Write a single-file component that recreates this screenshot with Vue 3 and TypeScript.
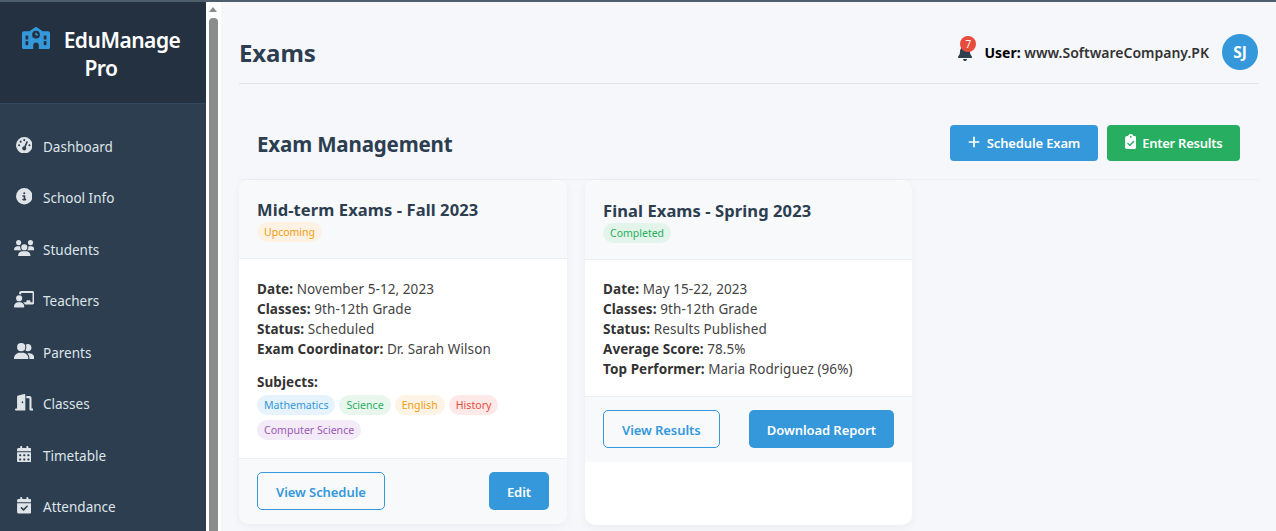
<script setup lang="ts">
interface NavItem { label: string; vb: string; w: number; d: string }
const calTop = 'M128 0c17.700 0 32 14.300 32 32V64H288V32c0-17.700 14.300-32 32-32s32 14.300 32 32V64h48c26.500 0 48 21.500 48 48v48H0V112C0 85.500 21.500 64 48 64H96V32c0-17.700 14.300-32 32-32z'
const nav: NavItem[] = [
  { label: 'Dashboard', vb: '0 0 512 512', w: 16.5, d: 'M0 256a256 256 0 1 1 512 0A256 256 0 1 1 0 256zM288 96a32 32 0 1 0 -64 0 32 32 0 1 0 64 0zM256 416c35.300 0 64-28.700 64-64c0-17.400-6.900-33.100-18.100-44.600L366 161.700c5.300-12.100-.2-26.300-12.300-31.600s-26.300 .2-31.600 12.300L257.900 288c-.6 0-1.300 0-1.900 0c-35.300 0-64 28.700-64 64s28.700 64 64 64zM176 144a32 32 0 1 0 -64 0 32 32 0 1 0 64 0zM96 288a32 32 0 1 0 0-64 32 32 0 1 0 0 64zm352-32a32 32 0 1 0 -64 0 32 32 0 1 0 64 0z' },
  { label: 'School Info', vb: '0 0 512 512', w: 16.5, d: 'M256 512A256 256 0 1 0 256 0a256 256 0 1 0 0 512zM216 336h24V272H216c-13.300 0-24-10.700-24-24s10.700-24 24-24h48c13.300 0 24 10.700 24 24v88h8c13.300 0 24 10.700 24 24s-10.700 24-24 24H216c-13.300 0-24-10.700-24-24s10.700-24 24-24zm40-208a32 32 0 1 1 0 64 32 32 0 1 1 0-64z' },
  { label: 'Students', vb: '0 0 640 512', w: 20.6, d: 'M144 0a80 80 0 1 1 0 160A80 80 0 1 1 144 0zM512 0a80 80 0 1 1 0 160A80 80 0 1 1 512 0zM0 298.700C0 239.800 47.800 192 106.700 192h42.700c15.900 0 31 3.500 44.600 9.700c-1.300 7.200-1.900 14.700-1.900 22.300c0 38.200 16.800 72.500 43.300 96c-.2 0-.4 0-.7 0H21.300C9.600 320 0 310.400 0 298.700zM405.300 320c-.2 0-.4 0-.7 0c26.600-23.500 43.300-57.800 43.300-96c0-7.600-.7-15-1.900-22.300c13.600-6.300 28.700-9.700 44.600-9.700h42.700C592.200 192 640 239.800 640 298.700c0 11.800-9.600 21.300-21.300 21.300H405.300zM224 224a96 96 0 1 1 192 0 96 96 0 1 1 -192 0zM128 485.300C128 411.700 187.700 352 261.300 352H378.700C452.300 352 512 411.700 512 485.300c0 14.700-11.900 26.700-26.700 26.700H154.700c-14.700 0-26.700-11.900-26.700-26.700z' },
  { label: 'Teachers', vb: '0 0 640 512', w: 20.6, d: 'M160 64c0-35.300 28.700-64 64-64H576c35.300 0 64 28.700 64 64V352c0 35.300-28.700 64-64 64H336.800c-11.800-25.500-29.900-47.500-52.400-64H384V320c0-17.700 14.300-32 32-32h64c17.700 0 32 14.300 32 32v32h64V64L224 64v49.100C205.200 102.200 183.300 96 160 96V64zm0 64a96 96 0 1 1 0 192 96 96 0 1 1 0-192zM133.300 352h53.300C260.300 352 320 411.700 320 485.300c0 14.700-11.900 26.700-26.700 26.700H26.700C11.900 512 0 500.100 0 485.300C0 411.700 59.700 352 133.300 352z' },
  { label: 'Parents', vb: '0 0 640 512', w: 20.6, d: 'M96 128a128 128 0 1 1 256 0A128 128 0 1 1 96 128zM0 482.300C0 383.800 79.800 304 178.300 304h91.400C368.200 304 448 383.800 448 482.300c0 16.400-13.300 29.700-29.700 29.700H29.700C13.300 512 0 498.700 0 482.300zM609.300 512H471.400c5.400-9.400 8.600-20.300 8.600-32v-8c0-60.700-27.100-115.200-69.800-151.800c2.400-.1 4.700-.2 7.100-.2h61.400C567.800 320 640 392.200 640 481.300c0 17-13.800 30.700-30.700 30.700zM432 256c-31 0-59-12.600-79.300-32.900C372.400 196.500 384 163.600 384 128c0-26.800-6.600-52.100-18.300-74.300C384.300 40.100 407.200 32 432 32c61.900 0 112 50.100 112 112s-50.100 112-112 112z' },
  { label: 'Classes', vb: '0 0 576 512', w: 18.6, d: 'M320 32c0-9.900-4.500-19.200-12.300-25.200S289.800-1.400 280.200 1l-179.900 45C79 51.300 64 70.500 64 92.500V448H32c-17.700 0-32 14.300-32 32s14.300 32 32 32H96 288h32V480 32zM256 256c0 17.700-10.700 32-24 32s-24-14.300-24-32s10.700-32 24-32s24 14.300 24 32zm96-128h96V480c0 17.700 14.300 32 32 32h64c17.700 0 32-14.300 32-32s-14.300-32-32-32H512V128c0-35.300-28.700-64-64-64H352v64z' },
  { label: 'Timetable', vb: '0 0 448 512', w: 14.6, d: calTop + 'M0 192H448V464c0 26.500-21.500 48-48 48H48c-26.500 0-48-21.500-48-48V192zm64 80v32c0 8.800 7.200 16 16 16h32c8.800 0 16-7.200 16-16V272c0-8.800-7.200-16-16-16H80c-8.800 0-16 7.200-16 16zm128 0v32c0 8.800 7.200 16 16 16h32c8.800 0 16-7.200 16-16V272c0-8.800-7.200-16-16-16H208c-8.800 0-16 7.200-16 16zm144-16c-8.800 0-16 7.200-16 16v32c0 8.800 7.200 16 16 16h32c8.800 0 16-7.200 16-16V272c0-8.800-7.200-16-16-16H336zM64 400v32c0 8.800 7.200 16 16 16h32c8.800 0 16-7.200 16-16V400c0-8.800-7.200-16-16-16H80c-8.800 0-16 7.200-16 16zm144-16c-8.800 0-16 7.200-16 16v32c0 8.800 7.200 16 16 16h32c8.800 0 16-7.200 16-16V400c0-8.800-7.200-16-16-16H208zm112 16v32c0 8.800 7.200 16 16 16h32c8.800 0 16-7.200 16-16V400c0-8.800-7.200-16-16-16H336c-8.800 0-16 7.200-16 16z' },
  { label: 'Attendance', vb: '0 0 448 512', w: 14.6, d: calTop + 'M0 192H448V464c0 26.500-21.500 48-48 48H48c-26.500 0-48-21.500-48-48V192zM329 305c9.400-9.400 9.400-24.600 0-33.900s-24.600-9.400-33.900 0l-95 95-47-47c-9.400-9.400-24.600-9.400-33.900 0s-9.400 24.600 0 33.900l64 64c9.400 9.400 24.600 9.400 33.900 0L329 305z' }
]
const school = 'M337.800 5.400C327-1.800 313-1.800 302.200 5.400L166.300 96H48C21.500 96 0 117.500 0 144V464c0 26.500 21.500 48 48 48H592c26.500 0 48-21.500 48-48V144c0-26.500-21.500-48-48-48H473.700L337.800 5.400zM256 416c0-35.300 28.700-64 64-64s64 28.700 64 64v96H256V416zM96 192h32c8.800 0 16 7.200 16 16v64c0 8.800-7.200 16-16 16H96c-8.800 0-16-7.200-16-16V208c0-8.800 7.200-16 16-16zm400 16c0-8.800 7.200-16 16-16h32c8.800 0 16 7.200 16 16v64c0 8.800-7.200 16-16 16H512c-8.800 0-16-7.200-16-16V208zM96 320h32c8.800 0 16 7.200 16 16v64c0 8.800-7.200 16-16 16H96c-8.800 0-16-7.200-16-16V336c0-8.800 7.200-16 16-16zm400 16c0-8.800 7.200-16 16-16h32c8.800 0 16 7.200 16 16v64c0 8.800-7.200 16-16 16H512c-8.800 0-16-7.200-16-16V336zM232 176a88 88 0 1 1 176 0 88 88 0 1 1 -176 0zm88-48c-8.800 0-16 7.200-16 16v32c0 8.800 7.200 16 16 16h32c8.800 0 16-7.200 16-16s-7.200-16-16-16H336V144c0-8.800-7.200-16-16-16z'
const bell = 'M224 0c-17.700 0-32 14.300-32 32V51.200C119 66 64 130.600 64 208v18.800c0 47-17.300 92.400-48.500 127.600l-7.400 8.300c-8.400 9.400-10.400 22.900-5.300 34.400S19.400 416 32 416H416c12.600 0 24-7.400 29.200-18.900s3.100-25-5.300-34.400l-7.400-8.300C401.300 319.200 384 273.900 384 226.800V208c0-77.400-55-142-128-156.800V32c0-17.700-14.300-32-32-32zm45.300 493.300c12-12 18.700-28.300 18.700-45.300H224 160c0 17 6.700 33.300 18.700 45.300s28.300 18.700 45.300 18.700s33.300-6.700 45.300-18.700z'
const plus = 'M256 80c0-17.700-14.300-32-32-32s-32 14.300-32 32V224H48c-17.700 0-32 14.300-32 32s14.300 32 32 32H192V432c0 17.700 14.300 32 32 32s32-14.300 32-32V288H400c17.700 0 32-14.300 32-32s-14.300-32-32-32H256V80z'
const clip = 'M192 0c-41.800 0-77.400 26.700-90.500 64H64C28.700 64 0 92.700 0 128V448c0 35.300 28.700 64 64 64H320c35.300 0 64-28.700 64-64V128c0-35.300-28.700-64-64-64H282.500C269.400 26.700 233.800 0 192 0zm0 64a32 32 0 1 1 0 64 32 32 0 1 1 0-64zM305 273L177 401c-9.400 9.400-24.600 9.400-33.900 0L79 337c-9.400-9.400-9.400-24.600 0-33.900s24.600-9.400 33.900 0l47 47L271 239c9.400-9.400 24.600-9.400 33.900 0s9.400 24.600 0 33.900z'
const subjects = [
  { name: 'Mathematics', cls: 'blue' },
  { name: 'Science', cls: 'green' },
  { name: 'English', cls: 'orange' },
  { name: 'History', cls: 'red' },
  { name: 'Computer Science', cls: 'purple' }
]
</script>

<template>
  <div class="page">
    <aside class="sidebar">
      <div class="brand">
        <svg class="logo" viewBox="0 0 640 512"><path :d="school" /></svg><span class="brand-text">EduManage Pro</span>
      </div>
      <nav class="nav">
        <a v-for="n in nav" :key="n.label" class="nav-item">
          <span class="nav-icon"><svg :viewBox="n.vb" :style="{ width: n.w + 'px' }"><path :d="n.d" /></svg></span>
          <span>{{ n.label }}</span>
        </a>
      </nav>
    </aside>
    <div class="scrollbar">
      <span class="arrow"></span>
      <span class="thumb"></span>
    </div>
    <main class="main">
      <header class="topbar">
        <h1>Exams</h1>
        <div class="user">
          <span class="bell">
            <svg viewBox="0 0 448 512"><path :d="bell" /></svg>
            <span class="badge">7</span>
          </span>
          <span class="user-name"><b>User:</b> www.SoftwareCompany.PK</span>
          <span class="avatar">SJ</span>
        </div>
      </header>
      <section class="mgmt">
        <h2>Exam Management</h2>
        <div class="actions">
          <button class="btn primary"><svg class="i-plus" viewBox="0 0 448 512"><path :d="plus" /></svg>Schedule Exam</button>
          <button class="btn success"><svg class="i-clip" viewBox="0 0 384 512"><path :d="clip" /></svg>Enter Results</button>
        </div>
      </section>
      <section class="cards">
        <article class="card first">
          <div class="card-head">
            <h3>Mid-term Exams - Fall 2023</h3>
            <span class="pill upcoming">Upcoming</span>
          </div>
          <div class="card-body">
            <p><b>Date:</b> November 5-12, 2023</p>
            <p><b>Classes:</b> 9th-12th Grade</p>
            <p><b>Status:</b> Scheduled</p>
            <p><b>Exam Coordinator:</b> Dr. Sarah Wilson</p>
            <div class="subjects">
              <b>Subjects:</b>
              <div class="tags">
                <span v-for="s in subjects" :key="s.name" class="tag" :class="s.cls">{{ s.name }}</span>
              </div>
            </div>
          </div>
          <div class="card-foot">
            <button class="btn2 outline">View Schedule</button>
            <button class="btn2 solid">Edit</button>
          </div>
        </article>
        <article class="card second">
          <div class="card-head">
            <h3>Final Exams - Spring 2023</h3>
            <span class="pill completed">Completed</span>
          </div>
          <div class="card-body">
            <p><b>Date:</b> May 15-22, 2023</p>
            <p><b>Classes:</b> 9th-12th Grade</p>
            <p><b>Status:</b> Results Published</p>
            <p><b>Average Score:</b> 78.5%</p>
            <p><b>Top Performer:</b> Maria Rodriguez (96%)</p>
          </div>
          <div class="card-foot">
            <button class="btn2 outline">View Results</button>
            <button class="btn2 solid">Download Report</button>
          </div>
        </article>
        <div class="spacer"></div>
      </section>
    </main>
  </div>
</template>

<style>
html, body { margin: 0; height: 100%; overflow: hidden; background: #f5f7fb; }
</style>

<style scoped>
* { box-sizing: border-box; }
.page {
  display: flex;
  height: 531px;
  overflow: hidden;
  border-top: 2px solid #4d5f6c;
  font-family: "Noto Sans", "Open Sans", sans-serif;
  background: #f5f7fb;
  color: #333;
}
.sidebar { width: 206px; flex: none; background: #2c3e50; color: #ecf0f1; }
.brand {
  height: 102px;
  padding: 24px 19px 0 15px;
  background: #233140;
  border-bottom: 1px solid #34495e;
  text-align: center;
  color: #fff;
  font-size: 21px;
  font-weight: 600;
  line-height: 28px;
}
.logo { width: 28px; height: 22.4px; fill: #3498db; margin-right: 14px; vertical-align: -1px; }
.brand-text { letter-spacing: -0.5px; }
.nav { padding-top: 17px; }
.nav-item {
  display: flex;
  align-items: center;
  height: 51.5px;
  padding-left: 14px;
  font-size: 13.5px;
  color: #dfe4e8;
}
.nav-icon { width: 20px; margin-right: 9px; display: flex; justify-content: center; margin-top: -4px; }
.nav-icon svg { height: 16.5px; fill: #dfe4e8; display: block; flex: none; }
.scrollbar { width: 15px; flex: none; background: #fff; display: flex; flex-direction: column; align-items: center; padding: 5px 0 0; }
.arrow { width: 0; height: 0; border-left: 4.5px solid transparent; border-right: 4.5px solid transparent; border-bottom: 5px solid #8a8a8a; margin-left: -2px; }
.thumb { width: 9px; flex: 1; background: #8c8c8c; border-radius: 4px 4px 0 0; margin: 6px 0 0 -1px; }
.main { flex: 1; padding: 0 18px; min-width: 0; }
.topbar {
  height: 82px;
  display: flex;
  align-items: center;
  justify-content: space-between;
  border-bottom: 1px solid #dfe3ea;
  padding-top: 19px;
}
h1 { margin: 0; font-size: 24px; font-weight: 700; color: #2c3e50; letter-spacing: -0.1px; }
.user { display: flex; align-items: center; }
.bell { position: relative; width: 14px; height: 16px; margin-right: 12px; margin-top: 2px; }
.bell svg { display: block; width: 14px; height: 16px; fill: #2c3e50; }
.badge {
  position: absolute;
  left: 2px;
  top: -9px;
  width: 16px;
  height: 16px;
  border-radius: 50%;
  background: #e74c3c;
  color: #fff;
  font-size: 10px;
  line-height: 16px;
  text-align: center;
}
.user-name { font-size: 14px; font-weight: 600; color: #333; margin-right: 13px; }
.user-name b { color: #000; font-weight: 700; }
.avatar {
  width: 36px;
  height: 36px;
  border-radius: 50%;
  background: #3498db;
  color: #fff;
  font-size: 15.5px;
  font-weight: 700;
  display: flex;
  align-items: center;
  justify-content: center;
}
.mgmt {
  height: 96px;
  display: flex;
  align-items: flex-start;
  justify-content: space-between;
  border-bottom: 1px solid #eceff4;
  padding: 41px 18px 0;
}
h2 { margin: 1px 0 0; font-size: 20.5px; font-weight: 700; line-height: 36px; color: #2c3e50; letter-spacing: -0.15px; }
.actions { display: flex; gap: 9px; }
button { font-family: inherit; border: 0; cursor: pointer; }
.btn {
  height: 36px;
  border-radius: 4px;
  color: #fff;
  font-size: 13px;
  font-weight: 600;
  display: flex;
  align-items: center;
  justify-content: center;
}
.primary { width: 148px; background: #3498db; letter-spacing: -0.15px; }
.success { width: 133px; background: #27ae60; letter-spacing: -0.25px; }
.i-plus { width: 12px; height: 14px; fill: #fff; margin-right: 7px; margin-top: -2px; }
.i-clip { width: 11.5px; height: 15px; fill: #fff; margin-right: 6px; margin-top: -3px; }
.cards { display: flex; gap: 18px; align-items: flex-start; }
.card {
  border-radius: 10px;
  background: #fff;
  box-shadow: 0 2px 10px rgba(0, 0, 0, 0.05);
  overflow: hidden;
  display: flex;
  flex-direction: column;
}
.first { width: 328px; height: 344px; }
.second { width: 327px; height: 345px; }
.card-head {
  flex: none;
  height: 80px;
  padding: 19px 18px 0;
  background: #f8f9fb;
  border-bottom: 1px solid #eceff3;
}
.first .card-head { height: 79px; padding-top: 18px; }
h3 { margin: 0; font-size: 16.5px; font-weight: 700; color: #2c3e50; line-height: 24px; letter-spacing: 0.1px; }
.pill { display: inline-block; height: 20px; padding: 0 7px; border-radius: 10px; font-size: 10.5px; line-height: 20px; vertical-align: top; }
.upcoming { background: #fdf2e3; color: #f39c12; }
.completed { background: #e3f5ea; color: #27ae60; }
.card-body { flex: 1; min-height: 0; padding: 19px 18px 0; font-size: 13.5px; line-height: 20px; color: #444; letter-spacing: 0.08px; }
.first .card-body { padding-top: 20px; }
.second .card-body { flex: none; height: 136px; }
.card-body p { margin: 0; }
.card-body b { font-weight: 700; color: #333; }
.subjects { margin-top: 13px; }
.tags { display: flex; flex-wrap: wrap; gap: 5px 4px; margin-top: 3px; letter-spacing: 0; }
.tag { height: 20px; padding: 0 7px; border-radius: 10px; font-size: 10.6px; line-height: 20px; }
.blue { background: #e6f3fc; color: #3498db; }
.green { background: #e8f6ee; color: #27ae60; }
.orange { background: #fef4e5; color: #f39c12; }
.red { background: #fce9e8; color: #e74c3c; }
.purple { background: #f3ebf7; color: #9b59b6; }
.card-foot {
  flex: none;
  height: 66px;
  padding: 13px 18px 0;
  background: #f8f9fb;
  border-top: 1px solid #eceff3;
  display: flex;
  justify-content: space-between;
  align-items: flex-start;
}
.btn2 { height: 38px; border-radius: 5px; font-size: 13px; font-weight: 600; letter-spacing: -0.07px; padding-top: 1px !important; }
.outline { background: transparent; border: 1px solid #3498db; color: #3498db; padding: 0 18px; }
.solid { background: #3498db; color: #fff; padding: 0 18px; }
.spacer { flex: 1; }
</style>
